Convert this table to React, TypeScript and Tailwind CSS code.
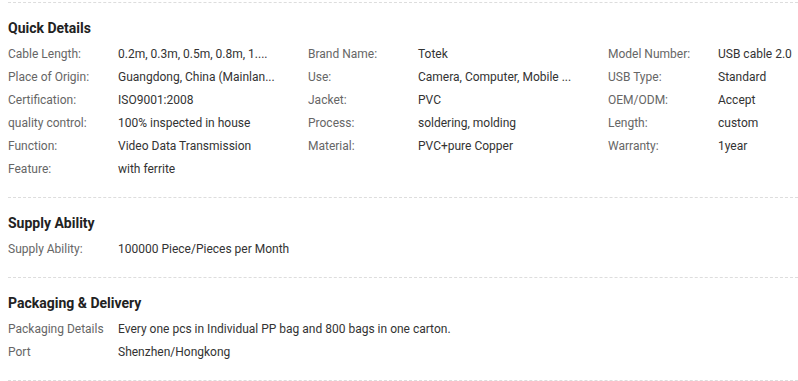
import React from 'react'

type Attr = [string, string]

const quick: Attr[] = [
  ['Cable Length:', '0.2m, 0.3m, 0.5m, 0.8m, 1....'],
  ['Brand Name:', 'Totek'],
  ['Model Number:', 'USB cable 2.0'],
  ['Place of Origin:', 'Guangdong, China (Mainlan...'],
  ['Use:', 'Camera, Computer, Mobile ...'],
  ['USB Type:', 'Standard'],
  ['Certification:', 'ISO9001:2008'],
  ['Jacket:', 'PVC'],
  ['OEM/ODM:', 'Accept'],
  ['quality control:', '100% inspected in house'],
  ['Process:', 'soldering, molding'],
  ['Length:', 'custom'],
  ['Function:', 'Video Data Transmission'],
  ['Material:', 'PVC+pure Copper'],
  ['Warranty:', '1year'],
  ['Feature:', 'with ferrite'],
]

function Row({ label, value }: { label: string; value: string }) {
  return (
    <div className="flex h-[23px] items-center whitespace-nowrap">
      <span className="w-[110px] shrink-0 text-[#666]">{label}</span>
      <span className="text-[#333]">{value}</span>
    </div>
  )
}

function Section({ title, children }: { title: string; children: React.ReactNode }) {
  return (
    <section className="border-t border-dashed border-[#ddd] pb-[17px] pt-[15px]">
      <h3 className="mb-1 text-[14px] font-bold leading-5 text-[#222]">{title}</h3>
      {children}
    </section>
  )
}

export default function App() {
  return (
    <div
      className="h-[381px] w-[798px] overflow-hidden bg-white pl-2 pt-[2px] text-[12px]"
      style={{ fontFamily: 'Roboto, "Liberation Sans", sans-serif' }}
    >
      <div className="w-[790px]">
        <Section title="Quick Details">
          <div className="grid grid-cols-[300px_300px_190px]">
            {quick.map(([l, v]) => (
              <Row key={l} label={l} value={v} />
            ))}
          </div>
        </Section>
        <Section title="Supply Ability">
          <Row label="Supply Ability:" value="100000 Piece/Pieces per Month" />
        </Section>
        <Section title="Packaging & Delivery">
          <Row
            label="Packaging Details"
            value="Every one pcs in Individual PP bag and 800 bags in one carton."
          />
          <Row label="Port" value="Shenzhen/Hongkong" />
        </Section>
        <div className="border-t border-dashed border-[#ddd]" />
      </div>
    </div>
  )
}
